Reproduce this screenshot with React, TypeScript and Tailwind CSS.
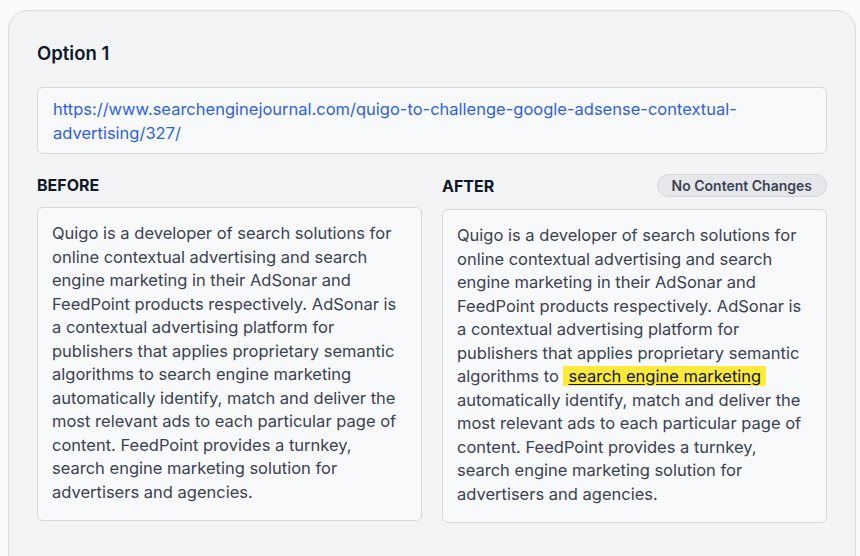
import React from 'react';

const BEFORE_TEXT =
  'Quigo is a developer of search solutions for online contextual advertising and search engine marketing in their AdSonar and FeedPoint products respectively. AdSonar is a contextual advertising platform for publishers that applies proprietary semantic algorithms to search engine marketing automatically identify, match and deliver the most relevant ads to each particular page of content. FeedPoint provides a turnkey, search engine marketing solution for advertisers and agencies.';

const App: React.FC = () => {
  return (
    <div className="min-h-screen bg-[#f9fafb] pt-2.5 pl-2 pr-1 font-['Inter',sans-serif]">
      <div className="rounded-t-[20px] border border-[#d8dae0] bg-[#f3f4f6] px-7 pt-7 pb-12">
        <h2 className="mb-5 text-[18.5px] leading-7 font-semibold text-gray-900">Option 1</h2>

        {/* Source URL */}
        <div className="mb-5 rounded-md border border-[#d8dae0] bg-[#f8f9fa] px-[15px] pt-[9px] pb-2 text-[16.5px] leading-6 text-[#2f5fe0]">
          https://www.searchenginejournal.com/quigo-to-challenge-google-adsense-contextual-advertising/327/
        </div>

        <div className="grid grid-cols-2 gap-5">
          {/* Before column */}
          <div>
            <div className="mb-3 flex h-[21px] items-center">
              <span className="text-base font-bold text-gray-900">BEFORE</span>
            </div>
            <div className="rounded-md border border-[#d8dae0] bg-[#f8f9fa] px-3.5 pt-3.5 pb-4 text-[16.5px] leading-[23.5px] text-[#3b4250]">
              {BEFORE_TEXT}
            </div>
          </div>

          {/* After column */}
          <div>
            <div className="mb-3 flex h-[23px] items-center justify-between">
              <span className="text-base font-bold text-gray-900">AFTER</span>
              <span className="rounded-full border border-[#d4d6dc] bg-[#e5e7eb] px-3.5 py-[2px] text-[14px] leading-[17px] font-semibold text-[#3b4250]">
                No Content Changes
              </span>
            </div>
            <div className="rounded-md border border-[#d8dae0] bg-[#f8f9fa] px-3.5 pt-3.5 pb-4 text-[16.5px] leading-[23.5px] text-[#3b4250]">
              Quigo is a developer of search solutions for online contextual advertising and search engine marketing in their AdSonar and FeedPoint products respectively. AdSonar is a contextual advertising platform for publishers that applies proprietary semantic algorithms to{' '}
              <span className="bg-[#fdea3b] px-[5px] text-gray-900 underline underline-offset-2">search engine marketing</span>{' '}
              automatically identify, match and deliver the most relevant ads to each particular page of content. FeedPoint provides a turnkey, search engine marketing solution for advertisers and agencies.
            </div>
          </div>
        </div>
      </div>
    </div>
  );
};

export default App;
